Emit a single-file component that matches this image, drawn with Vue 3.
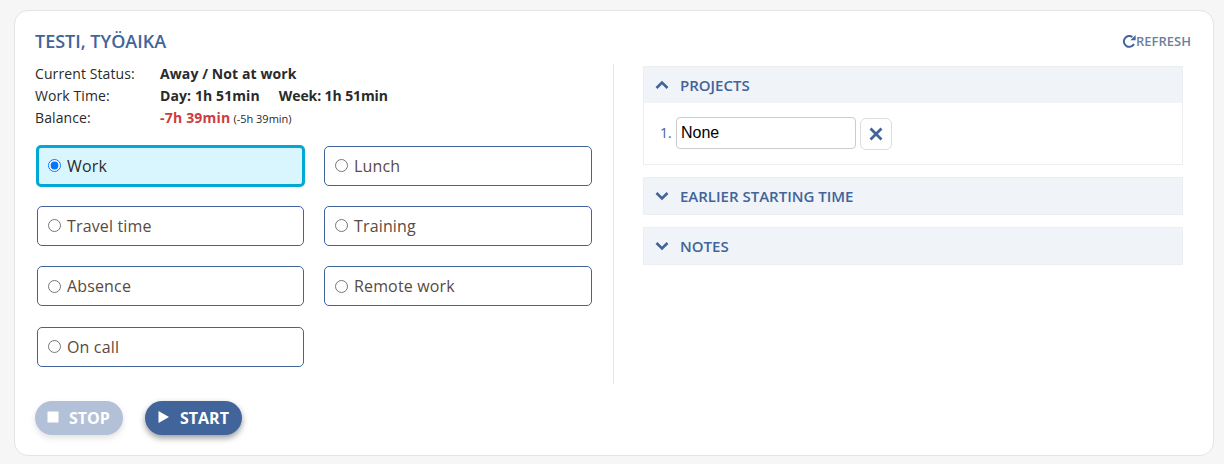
<script setup>
import { ref } from 'vue'

const selected = ref('work')

const options = [
  { id: 'work', label: 'Work' },
  { id: 'lunch', label: 'Lunch' },
  { id: 'travel', label: 'Travel time' },
  { id: 'training', label: 'Training' },
  { id: 'absence', label: 'Absence' },
  { id: 'remote', label: 'Remote work' },
  { id: 'oncall', label: 'On call' }
]
</script>

<template>
  <div class="page">
    <div class="card">
      <div class="card-head">
        <h2 class="title">TESTI, TYÖAIKA</h2>
        <a class="refresh">
          <svg class="refresh-icon" viewBox="0 0 14 14" width="14" height="14">
            <path d="M12 10A5.4 5.4 0 1 1 10.4 3" fill="none" stroke="#41649a" stroke-width="2" />
            <path d="M8.4 6.2H13.6V1Z" fill="#41649a" />
          </svg>
          <span>REFRESH</span>
        </a>
      </div>

      <div class="columns">
        <div class="left">
          <div class="status">
            <div class="status-row">
              <span class="status-label">Current Status:</span>
              <b>Away / Not at work</b>
            </div>
            <div class="status-row">
              <span class="status-label">Work Time:</span>
              <b class="day">Day: 1h 51min</b>
              <b class="week">Week: 1h 51min</b>
            </div>
            <div class="status-row">
              <span class="status-label">Balance:</span>
              <b class="negative">-7h 39min</b>
              <small>(-5h 39min)</small>
            </div>
          </div>

          <div class="options">
            <label
              v-for="opt in options"
              :key="opt.id"
              class="option"
              :class="{ active: selected === opt.id }"
            >
              <input v-model="selected" type="radio" name="worktype" :value="opt.id" />
              <span>{{ opt.label }}</span>
            </label>
          </div>
        </div>

        <div class="right">
          <section class="panel open">
            <header class="panel-head">
              <svg class="chevron" viewBox="0 0 14 10" width="14" height="10">
                <path d="M1.5 8L7 2.5L12.5 8" fill="none" stroke="#41649a" stroke-width="2.6" />
              </svg>
              <span>PROJECTS</span>
            </header>
            <div class="panel-body">
              <span class="num">1.</span>
              <input class="project-input" type="text" value="None" />
              <button class="clear" type="button">
                <svg viewBox="0 0 14 14" width="14" height="14">
                  <path d="M1.5 1.5L12.5 12.5M12.5 1.5L1.5 12.5" fill="none" stroke="#41649a" stroke-width="2.8" />
                </svg>
              </button>
            </div>
          </section>
          <section class="panel">
            <header class="panel-head">
              <svg class="chevron" viewBox="0 0 14 10" width="14" height="10">
                <path d="M1.5 2L7 7.5L12.5 2" fill="none" stroke="#41649a" stroke-width="2.6" />
              </svg>
              <span>EARLIER STARTING TIME</span>
            </header>
          </section>
          <section class="panel">
            <header class="panel-head">
              <svg class="chevron" viewBox="0 0 14 10" width="14" height="10">
                <path d="M1.5 2L7 7.5L12.5 2" fill="none" stroke="#41649a" stroke-width="2.6" />
              </svg>
              <span>NOTES</span>
            </header>
          </section>
        </div>
      </div>

      <div class="actions">
        <button class="action stop" type="button">
          <svg viewBox="0 0 12 12" width="12" height="12"><rect x="0.5" y="0.5" width="11" height="11" fill="#fff" /></svg>
          <span>STOP</span>
        </button>
        <button class="action start" type="button">
          <svg viewBox="0 0 12 12" width="12" height="12"><path d="M0.5 0L11 6L0.5 12Z" fill="#fff" /></svg>
          <span>START</span>
        </button>
      </div>
    </div>
  </div>
</template>

<style>
html,
body {
  margin: 0;
  background: #f6f6f6;
}
</style>

<style scoped>
.page {
  box-sizing: border-box;
  height: 464px;
  padding: 10px 10px 8px 14px;
  font-family: "Open Sans", sans-serif;
  color: #2a2a2a;
}

.card {
  box-sizing: border-box;
  height: 446px;
  padding: 18px 20px 0 20px;
  background: #fff;
  border: 1px solid #e4e4e4;
  border-radius: 14px;
}

.card-head {
  display: flex;
  justify-content: space-between;
  align-items: center;
  height: 24px;
  padding-right: 2px;
}

.title {
  margin: 0;
  font-size: 18px;
  font-weight: 600;
  line-height: 24px;
  color: #41649a;
}

.refresh {
  display: flex;
  align-items: center;
  font-size: 13px;
  font-weight: 600;
  color: #6b7f9e;
}

.columns {
  display: flex;
  margin-top: 11px;
  height: 320px;
}

.left {
  box-sizing: border-box;
  width: 579px;
  border-right: 1px solid #e6e6e6;
}

.right {
  width: 540px;
  margin-left: 29px;
  padding-top: 2px;
}

.status {
  margin-top: -1px;
  font-size: 14px;
  line-height: 22px;
  letter-spacing: 0.1px;
}

.status-row {
  display: flex;
  align-items: baseline;
}

.status-label {
  width: 125px;
}

.status b {
  font-weight: 700;
}

.status .day {
  margin-right: 19px;
}

.status .week {
  letter-spacing: -0.1px;
}

.status .negative {
  letter-spacing: 0.2px;
  color: #cc3d3d;
}

.status small {
  margin-left: 3px;
  font-size: 11px;
  letter-spacing: 0;
}

.options {
  display: grid;
  grid-template-columns: 267px 268px;
  column-gap: 20px;
  grid-auto-rows: 40px;
  row-gap: 20.3px;
  margin-top: 15.7px;
  margin-left: 2px;
}

.option {
  display: flex;
  align-items: center;
  gap: 6px;
  box-sizing: border-box;
  padding-left: 10px;
  border: 1px solid #41649a;
  border-radius: 5px;
  font-size: 16px;
  letter-spacing: 0.15px;
  color: #5a4a42;
}

.option.active {
  margin: -1px;
  padding-left: 9px;
  border: 3px solid #00a8d6;
  background: #d9f6ff;
  color: #2a2a2a;
}

.option input {
  width: 13px;
  height: 13px;
  margin: 0;
}

.panel {
  margin-bottom: 12px;
  border: 1px solid #eceef2;
}

.panel-head {
  display: flex;
  align-items: center;
  gap: 11px;
  box-sizing: border-box;
  height: 36px;
  padding-left: 11px;
  background: #f0f3f8;
  font-size: 15px;
  font-weight: 600;
  color: #41649a;
}

.panel-body {
  display: flex;
  align-items: flex-start;
  box-sizing: border-box;
  height: 61px;
  padding: 14px 0 0 16px;
}

.num {
  width: 16px;
  font-size: 14px;
  line-height: 32px;
  color: #41649a;
}

.project-input {
  box-sizing: border-box;
  width: 180px;
  height: 32px;
  padding: 0 4px;
  border: 1px solid #ccc;
  border-radius: 4px;
  font-family: "Liberation Sans", sans-serif;
  font-size: 16px;
  color: #000;
}

.clear {
  display: flex;
  align-items: center;
  justify-content: center;
  width: 32px;
  height: 32px;
  margin: 1px 0 0 4px;
  padding: 0;
  background: #fff;
  border: 1px solid #ddd;
  border-radius: 6px;
}

.actions {
  display: flex;
  gap: 22px;
  margin-top: 17px;
}

.action {
  display: flex;
  align-items: center;
  gap: 10px;
  box-sizing: border-box;
  height: 34px;
  padding: 0 12px;
  border: none;
  border-radius: 17px;
  font-family: "Open Sans", sans-serif;
  font-size: 16px;
  font-weight: 700;
  color: #fff;
}

.action svg {
  margin-top: -2px;
}

.stop {
  width: 88px;
  background: #b2c1d7;
  box-shadow: 0 3px 6px rgba(0, 0, 0, 0.12);
}

.start {
  width: 97px;
  padding-left: 13px;
  background: #41649a;
  box-shadow: 0 3px 6px rgba(0, 0, 0, 0.4);
}
</style>
